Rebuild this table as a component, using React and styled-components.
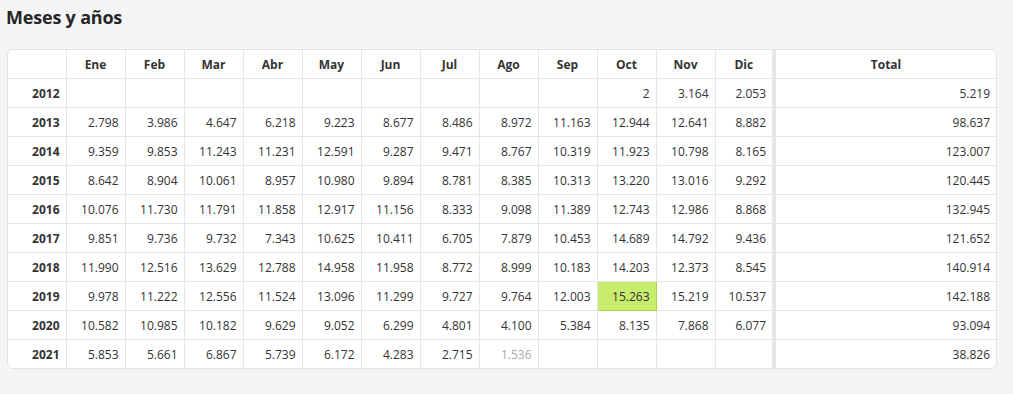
import React from 'react'
import styled, { createGlobalStyle } from 'styled-components'

const MONTHS = ['Ene', 'Feb', 'Mar', 'Abr', 'May', 'Jun', 'Jul', 'Ago', 'Sep', 'Oct', 'Nov', 'Dic']

const rows = [
  { year: 2012, values: [null, null, null, null, null, null, null, null, null, '2', '3.164', '2.053'], total: '5.219' },
  { year: 2013, values: ['2.798', '3.986', '4.647', '6.218', '9.223', '8.677', '8.486', '8.972', '11.163', '12.944', '12.641', '8.882'], total: '98.637' },
  { year: 2014, values: ['9.359', '9.853', '11.243', '11.231', '12.591', '9.287', '9.471', '8.767', '10.319', '11.923', '10.798', '8.165'], total: '123.007' },
  { year: 2015, values: ['8.642', '8.904', '10.061', '8.957', '10.980', '9.894', '8.781', '8.385', '10.313', '13.220', '13.016', '9.292'], total: '120.445' },
  { year: 2016, values: ['10.076', '11.730', '11.791', '11.858', '12.917', '11.156', '8.333', '9.098', '11.389', '12.743', '12.986', '8.868'], total: '132.945' },
  { year: 2017, values: ['9.851', '9.736', '9.732', '7.343', '10.625', '10.411', '6.705', '7.879', '10.453', '14.689', '14.792', '9.436'], total: '121.652' },
  { year: 2018, values: ['11.990', '12.516', '13.629', '12.788', '14.958', '11.958', '8.772', '8.999', '10.183', '14.203', '12.373', '8.545'], total: '140.914' },
  { year: 2019, values: ['9.978', '11.222', '12.556', '11.524', '13.096', '11.299', '9.727', '9.764', '12.003', '15.263', '15.219', '10.537'], total: '142.188' },
  { year: 2020, values: ['10.582', '10.985', '10.182', '9.629', '9.052', '6.299', '4.801', '4.100', '5.384', '8.135', '7.868', '6.077'], total: '93.094' },
  { year: 2021, values: ['5.853', '5.661', '6.867', '5.739', '6.172', '4.283', '2.715', '1.536', null, null, null, null], total: '38.826' },
]

// best month overall, and the month still in progress
const BEST = { year: 2019, month: 9 }
const PARTIAL = { year: 2021, month: 7 }

const GlobalStyle = createGlobalStyle`
  body {
    margin: 0;
    background: #f5f5f5;
    font-family: "Open Sans", "Noto Sans", sans-serif;
    color: #333;
  }
`

function App() {
  return (
    <>
      <GlobalStyle />
      <Page>
        <Title>Meses y años</Title>
        <Card>
          <Table>
            <colgroup>
              <col style={{ width: 58 }} />
              {MONTHS.map(m => <col key={m} style={{ width: 59 }} />)}
              <col />
            </colgroup>
            <thead>
              <tr>
                <Head />
                {MONTHS.map(m => <Head key={m}>{m}</Head>)}
                <Head total>Total</Head>
              </tr>
            </thead>
            <tbody>
              {rows.map(row => (
                <tr key={row.year}>
                  <Year>{row.year}</Year>
                  {row.values.map((v, i) => (
                    <Cell
                      key={i}
                      best={row.year === BEST.year && i === BEST.month}
                      partial={row.year === PARTIAL.year && i === PARTIAL.month}
                    >
                      {v}
                    </Cell>
                  ))}
                  <Cell total>{row.total}</Cell>
                </tr>
              ))}
            </tbody>
          </Table>
        </Card>
      </Page>
    </>
  )
}

export default App

const Page = styled.div`
  padding: 4px 16px 0 7px;
`
const Title = styled.h2`
  margin: 0 0 19px -1px;
  font-size: 18px;
  line-height: 26px;
  font-weight: 700;
  color: #262626;
  letter-spacing: -0.2px;
`
const Card = styled.div`
  background: #fff;
  border: 1px solid #e3e3e3;
  border-radius: 6px;
  overflow: hidden;
`
const Table = styled.table`
  width: 100%;
  table-layout: fixed;
  border-collapse: collapse;
  border-style: hidden;
  font-size: 12px;
  td, th {
    height: 28px;
    border: 1px solid #e6e6e6;
    padding: 0 6px;
    white-space: nowrap;
  }
`
const Head = styled.th`
  font-weight: 700;
  text-align: center;
  color: #333;
  ${({ total }) => total && 'border-left: 4px solid #e6e6e6 !important;'}
`
const Year = styled.th`
  font-weight: 700;
  text-align: right;
  color: #333;
`
const Cell = styled.td`
  text-align: right;
  color: ${({ partial }) => (partial ? '#a8a8a8' : '#333')};
  background: ${({ best }) => (best ? '#c8ec6c' : 'transparent')};
  ${({ best }) => best && 'border: 1px solid #a9d640 !important;'}
  ${({ total }) => total && 'border-left: 4px solid #e6e6e6 !important;'}
`
